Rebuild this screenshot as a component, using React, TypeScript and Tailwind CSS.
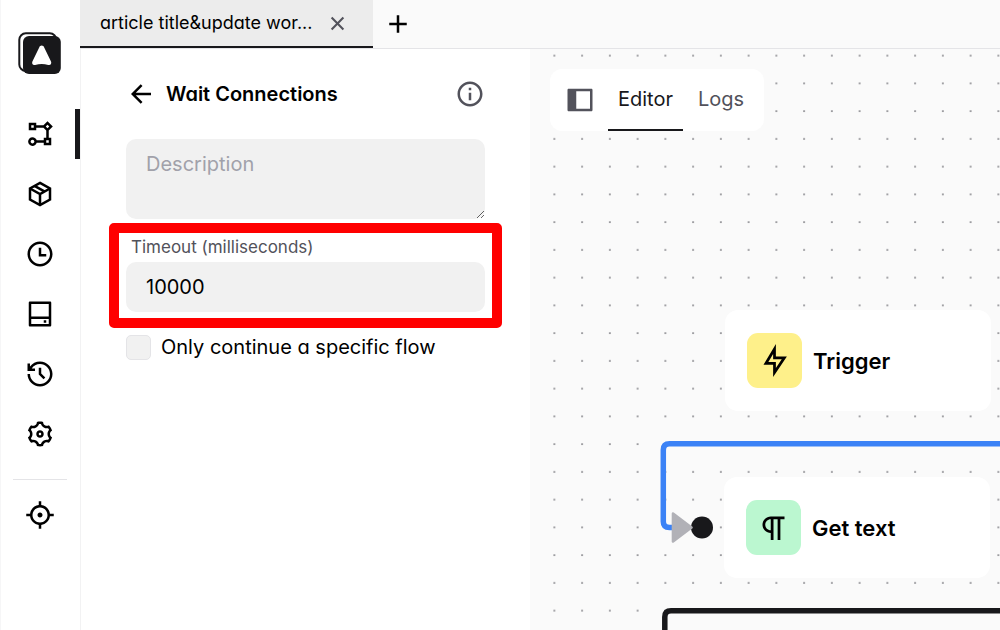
import type { ReactNode } from 'react';
import {
  RiAddLine,
  RiArrowLeftLine,
  RiCloseLine,
  RiFlashlightLine,
  RiFlowChart,
  RiFocus3Line,
  RiHardDrive2Line,
  RiHistoryLine,
  RiInformationLine,
  RiParagraph,
  RiSettings3Line,
  RiSideBarFill,
  RiTimeLine,
} from 'react-icons/ri';

function PackageIcon({ className }: { className?: string }) {
  return (
    <svg viewBox="0 0 24 24" className={className} fill="none" stroke="currentColor" strokeWidth="2" aria-hidden="true">
      <path d="M12 3.150L20 7.600V16.400L12 20.850L4 16.400V7.600Z" />
      <path d="M4 7.600L12 12.100L20 7.600M12 12.100V20.850M7.600 5.500L15.800 10.100" />
    </svg>
  );
}

const navItems = [
  { label: 'Workflows', Icon: RiFlowChart, active: true },
  { label: 'Packages', Icon: PackageIcon },
  { label: 'Schedule', Icon: RiTimeLine },
  { label: 'Storage', Icon: RiHardDrive2Line },
  { label: 'Logs', Icon: RiHistoryLine },
  { label: 'Settings', Icon: RiSettings3Line },
];

function Logo() {
  return (
    <svg viewBox="0 0 44 44" className="size-11" aria-hidden="true">
      <rect x="1.300" y="1.300" width="37" height="37.600" rx="6.500" fill="#fff" stroke="#18181b" strokeWidth="2" />
      <rect x="5" y="4" width="37.800" height="38" rx="6" fill="#18181b" />
      <path
        d="M23.700 13.600c1.100 0 2 .7 2.500 1.800l6.800 14.200c.9 2.200-.5 4-2.700 3.400-4.600-1.500-8.600-1.500-13.200 0-2.200.6-3.600-1.200-2.700-3.400l6.800-14.200c.5-1.100 1.400-1.800 2.500-1.800z"
        fill="#fff"
      />
    </svg>
  );
}

function Sidebar() {
  return (
    <aside className="flex w-20 shrink-0 flex-col items-center bg-white pt-8 shadow-[inset_1px_0_0_#f6f6f7]">
      <Logo />
      <nav className="mt-[33px] flex w-full flex-col gap-2.5">
        {navItems.map(({ label, Icon, active }) => (
          <a
            key={label}
            href="#"
            aria-label={label}
            className={
              active
                ? 'flex h-[50px] items-center justify-center border-r-[5px] border-[#18181b] pl-[5px]'
                : 'flex h-[50px] items-center justify-center'
            }
          >
            <Icon className="size-[30px]" />
          </a>
        ))}
      </nav>
      <hr className="mt-5 w-[54px] border-[#e4e4e7]" />
      <button type="button" aria-label="Element selector" className="mt-5">
        <RiFocus3Line className="size-[30px]" />
      </button>
    </aside>
  );
}

function TabBar() {
  return (
    <header className="flex h-[49px] shrink-0 border-b border-[#e4e4e7] bg-[#fafafa]">
      <div className="flex w-[293px] items-center border-b-2 border-[#18181b] bg-[#ececec] pr-[23px] pl-5">
        <a href="#" className="min-w-0 flex-1 truncate text-[18px] leading-6">
          article title&amp;update wor...
        </a>
        <button type="button" aria-label="Close tab" className="text-[#52525b]">
          <RiCloseLine className="size-[25px]" />
        </button>
      </div>
      <button type="button" aria-label="New tab" className="ml-2.5">
        <RiAddLine className="size-[30px]" />
      </button>
    </header>
  );
}

function EditPanel() {
  return (
    <section className="w-[450px] shrink-0 border-l border-[#f2f2f3] bg-white px-[45px] pt-[30px]">
      <div className="flex items-center">
        <button type="button" aria-label="Back">
          <RiArrowLeftLine className="size-[30px]" />
        </button>
        <h1 className="ml-2.5 flex-1 text-[20px] leading-[30px] font-semibold">Wait Connections</h1>
        <button type="button" aria-label="Information" className="text-[#52525b]">
          <RiInformationLine className="size-[30px]" />
        </button>
      </div>
      <textarea
        aria-label="Description"
        placeholder="Description"
        className="mt-[30px] block h-20 w-full rounded-[10px] bg-[#f1f1f1] px-5 py-2.5 text-[20px] leading-[30px] outline-none placeholder:text-[#a1a1aa]"
      />
      <div className="relative pt-4">
        <label htmlFor="timeout" className="block pl-[5px] text-[17px] leading-[25px] text-[#52525b]">
          Timeout (milliseconds)
        </label>
        <input
          id="timeout"
          type="text"
          inputMode="numeric"
          defaultValue="10000"
          className="mt-0.5 block h-[50px] w-full rounded-[10px] bg-[#f1f1f1] px-5 text-[20px] outline-none"
        />
        <div className="pointer-events-none absolute -inset-x-[17px] top-1 -bottom-4 rounded-[5px] border-[10px] border-[#ff0000]" />
      </div>
      <label className="mt-5 flex items-center gap-2.5 text-[20px] leading-[30px]">
        <input
          type="checkbox"
          className="size-[25px] appearance-none rounded-[5px] border border-[#e4e4e7] bg-[#f1f1f1] checked:bg-[#18181b]"
        />
        Only continue a specific flow
      </label>
    </section>
  );
}

function CanvasTabs() {
  return (
    <div className="absolute top-5 left-5 flex h-[62px] items-center rounded-xl bg-white pr-2.5 pl-[15px]">
      <button type="button" aria-label="Toggle sidebar" className="mr-[13px] text-[#52525b]">
        <RiSideBarFill className="size-[30px]" />
      </button>
      <div className="flex h-full gap-[5px] text-[20px]">
        <button type="button" className="border-b-2 border-[#18181b] px-2.5 text-[#18181b]">
          Editor
        </button>
        <button type="button" className="border-b-2 border-transparent px-2.5 text-[#52525b]">
          Logs
        </button>
      </div>
    </div>
  );
}

function Edges() {
  return (
    <svg className="absolute inset-0 size-full" aria-hidden="true">
      <defs>
        <pattern id="dots" x="10.500" y="-7.300" width="27.750" height="27.750" patternUnits="userSpaceOnUse">
          <circle cx="13.875" cy="13.875" r="0.850" fill="#55555c" />
        </pattern>
      </defs>
      <rect width="100%" height="100%" fill="url(#dots)" />
      <path
        d="M2000 394.800H139.500Q133.300 394.800 133.300 401V472.500Q133.300 478.500 139.500 478.500H146"
        fill="none"
        stroke="#3b82f6"
        strokeWidth="5.500"
      />
      <path
        d="M2000 561.800H141Q134.800 561.800 134.800 568V2000"
        fill="none"
        stroke="#18181b"
        strokeWidth="5.500"
      />
      <circle cx="172" cy="478.500" r="11" fill="#18181b" />
      <path
        d="M143 464.500L161.500 478.500L143 492.500Z"
        fill="#b1b1b7"
        stroke="#b1b1b7"
        strokeWidth="2.600"
        strokeLinejoin="round"
      />
    </svg>
  );
}

type FlowNodeProps = { className: string; iconClass: string; icon: ReactNode; title: string };

function FlowNode({ className, iconClass, icon, title }: FlowNodeProps) {
  return (
    <article className={`absolute flex w-[266px] items-center gap-[11px] rounded-[13px] bg-white px-[22px] py-[23px] ${className}`}>
      <div className={`flex size-[55px] items-center justify-center rounded-[11px] ${iconClass}`}>{icon}</div>
      <h2 className="text-[22px] leading-8 font-semibold">{title}</h2>
    </article>
  );
}

export default function App() {
  return (
    <div className="flex h-screen overflow-hidden bg-white font-['Inter',sans-serif] text-black [font-feature-settings:'cv11']">
      <Sidebar />
      <div className="flex min-w-0 flex-1 flex-col">
        <TabBar />
        <div className="flex min-h-0 flex-1">
          <EditPanel />
          <main className="relative min-w-0 flex-1 overflow-hidden bg-[#fafafa]">
            <Edges />
            <CanvasTabs />
            <FlowNode
              className="top-[261px] left-[195px]"
              iconClass="bg-[#fef08a]"
              icon={<RiFlashlightLine className="size-[33px]" />}
              title="Trigger"
            />
            <FlowNode
              className="top-[428px] left-[194px]"
              iconClass="bg-[#bbf7d0]"
              icon={<RiParagraph className="size-[33px]" />}
              title="Get text"
            />
          </main>
        </div>
      </div>
    </div>
  );
}
